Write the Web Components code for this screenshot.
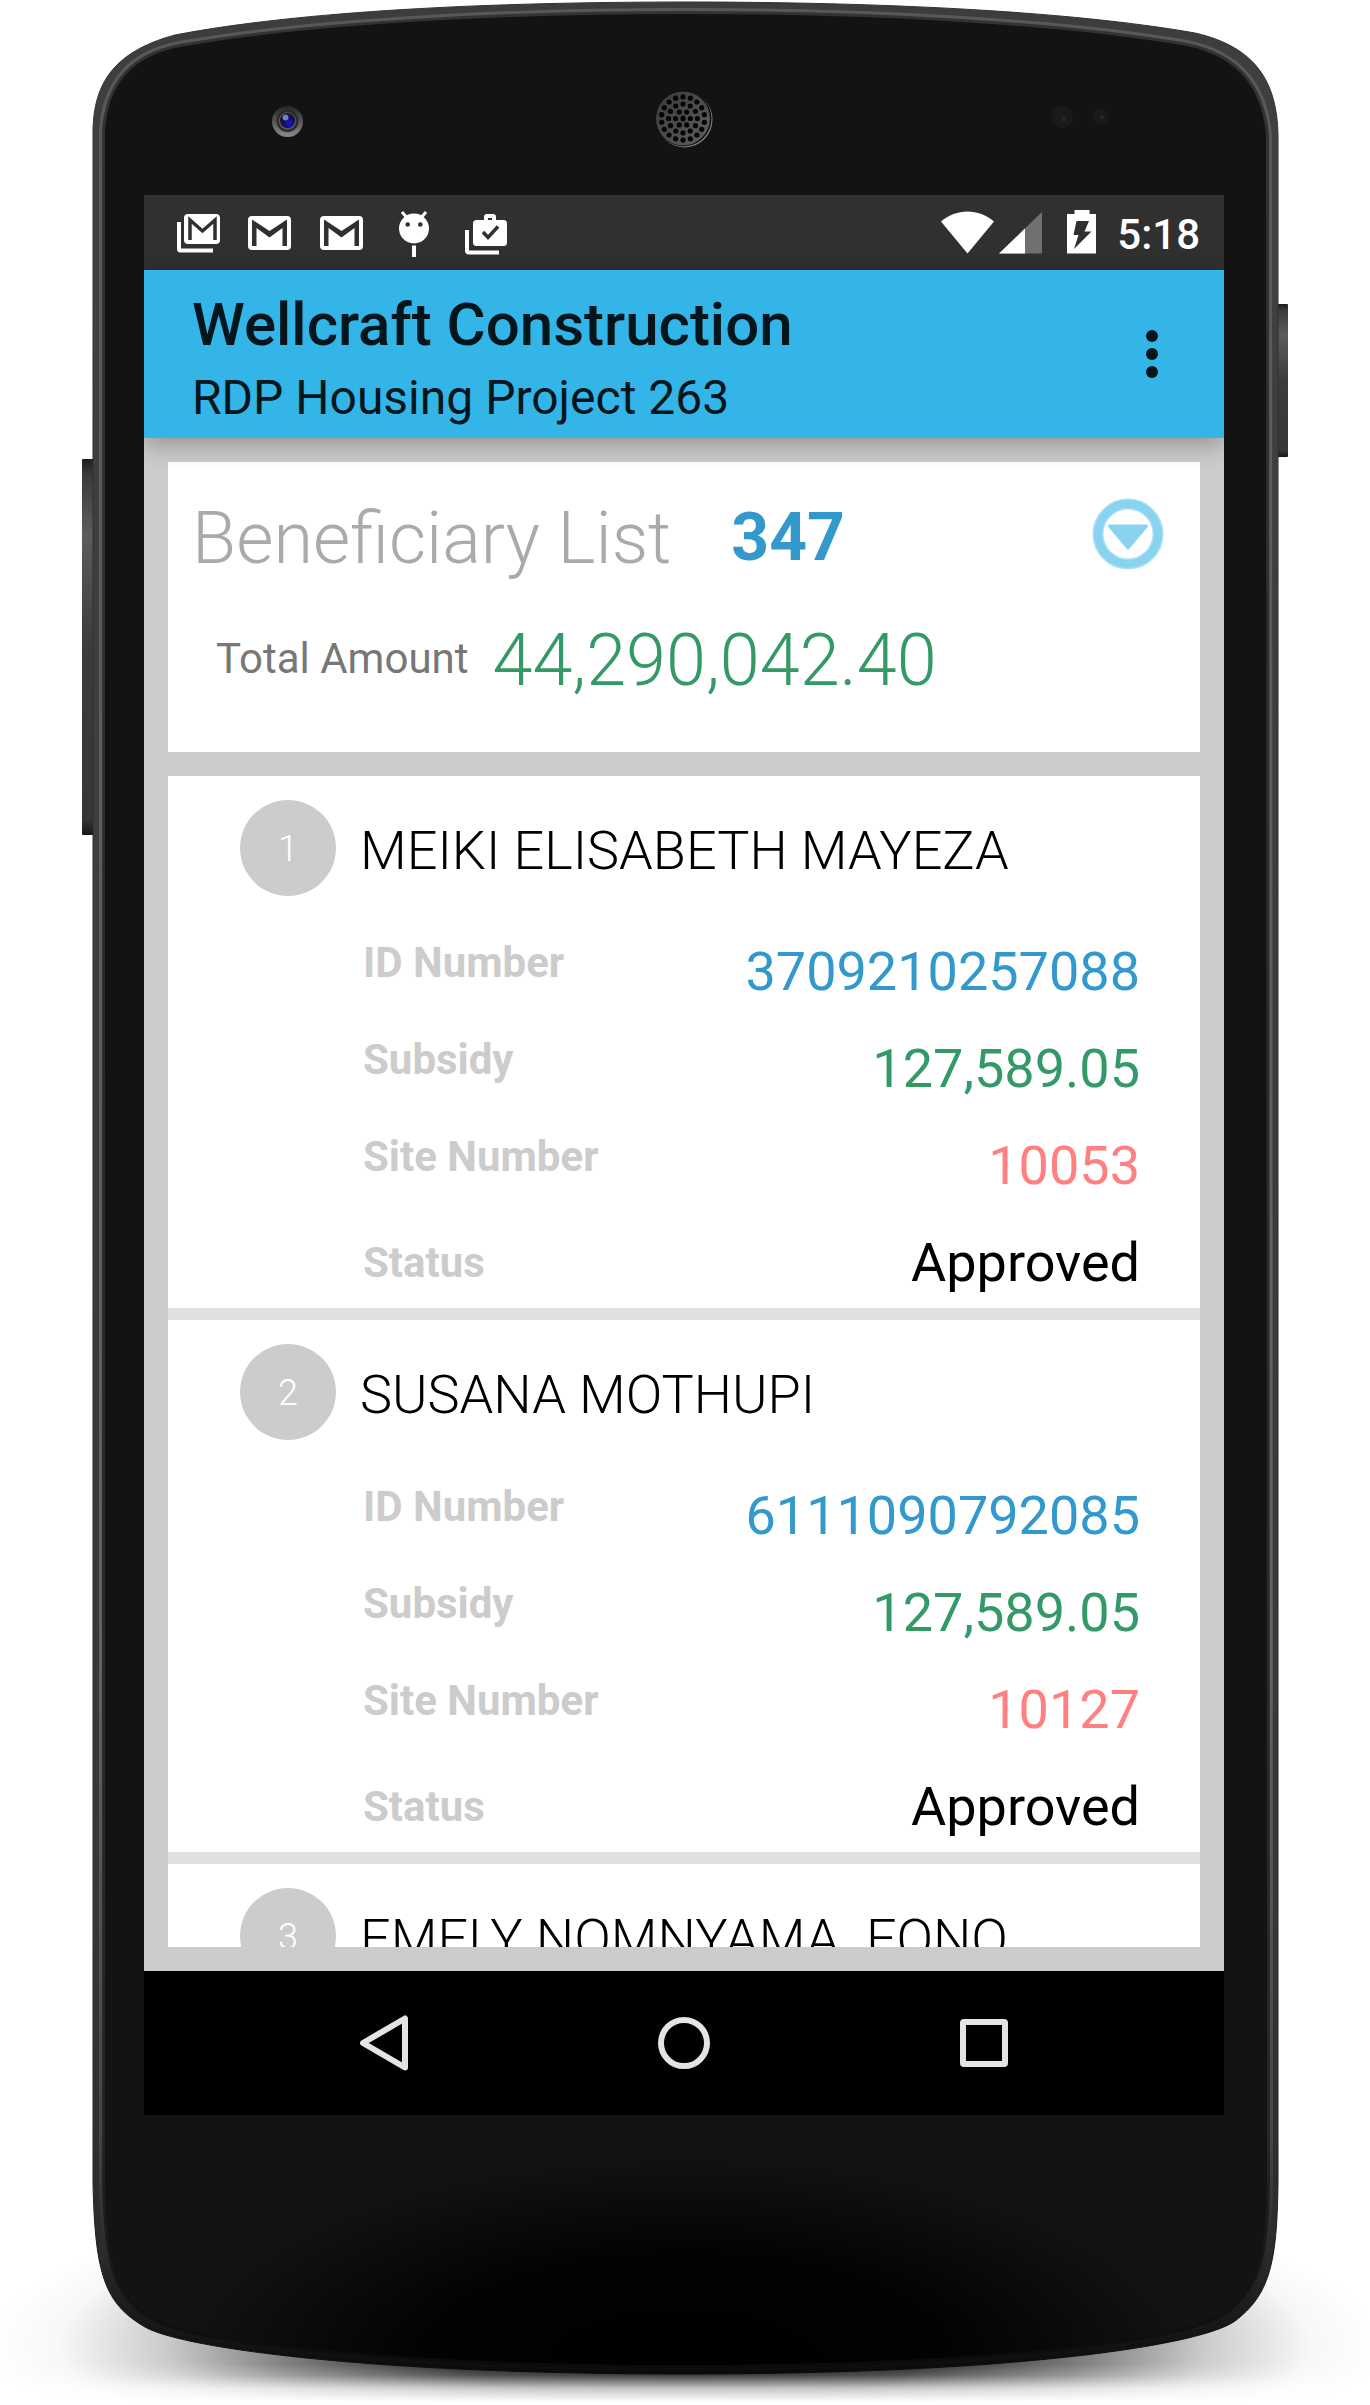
<!DOCTYPE html>
<html lang="en">
<head>
<meta charset="utf-8">
<meta name="viewport" content="width=device-width, initial-scale=1">
<title>Beneficiary List</title>
<style>
  html, body { margin: 0; background: #fff; }
  body { font-family: Roboto, "Liberation Sans", sans-serif; color: #000; }
</style>
</head>
<body>
<phone-frame>
  <status-bar time="5:18"></status-bar>
  <app-toolbar>
    <span slot="title">Wellcraft Construction</span>
    <span slot="subtitle">RDP Housing Project 263</span>
  </app-toolbar>
  <app-content>
    <summary-card heading="Beneficiary List" count="347" label="Total Amount" amount="44,290,042.40"></summary-card>
    <beneficiary-list>
      <beneficiary-item number="1" name="MEIKI ELISABETH MAYEZA" idnumber="3709210257088" subsidy="127,589.05" site="10053" status="Approved"></beneficiary-item>
      <beneficiary-item number="2" name="SUSANA MOTHUPI" idnumber="6111090792085" subsidy="127,589.05" site="10127" status="Approved"></beneficiary-item>
      <beneficiary-item number="3" name="EMELY NOMNYAMA  FONO"></beneficiary-item>
    </beneficiary-list>
  </app-content>
  <nav-bar></nav-bar>
</phone-frame>

<script>
  function define(name, render) {
    customElements.define(name, class extends HTMLElement {
      connectedCallback() {
        if (this.shadowRoot) return;
        const root = this.attachShadow({ mode: 'open' });
        root.innerHTML = '<style>*{box-sizing:border-box}button{border:0;padding:0;background:none;color:inherit;font:inherit}svg{display:block}</style>' + render(this);
      }
    });
  }

  /* Speaker perforations: a centre hole and three rings around it */
  function speakerHoles() {
    let out = '<ellipse cx="683" cy="118.500" rx="2.600" ry="3"/>';
    [[7.4, 6], [14.4, 12], [21.6, 18]].forEach(([r, n]) => {
      for (let i = 0; i < n; i++) {
        const a = (i + (n === 6 ? 0.5 : 0)) / n * Math.PI * 2 + Math.PI / 2;
        out += `<circle cx="${(683 + r * Math.cos(a)).toFixed(1)}" cy="${(118.5 + r * Math.sin(a)).toFixed(1)}" r="2.600"/>`;
      }
    });
    return out;
  }

  const OUTER = 'M93 2183 L93 130 C94 85 112 52 175 35 C300 11 490 2 685 2 C880 2 1070 11 1195 33 C1256 47 1277 82 1278 135 L1278 2183 C1277 2265 1269 2295 1235 2321 C1200 2346 1010 2374 685 2374 C360 2374 180 2347 145 2327 C105 2304 95 2275 93 2183 Z';
  const INNER = 'M105 2183 L105 130 C108 95 122 58 180 47 C310 24 500 14 685 14 C870 14 1060 24 1187 46 C1240 57 1262 90 1266 135 L1267 2183 C1266 2260 1257 2288 1225 2312 C1185 2338 1000 2365 685 2365 C370 2365 190 2338 155 2319 C117 2297 107 2270 105 2183 Z';

  define('phone-frame', () => `
    <style>
      :host { display: flex; flex-direction: column; position: relative; isolation: isolate; box-sizing: border-box; height: 100vh; padding: 195px 146px 290px 144px; overflow: hidden; }
      .body { position: absolute; inset: 0; width: 100%; height: 100%; z-index: -1; }
      .screen { flex: 1; min-height: 0; display: flex; flex-direction: column; overflow: hidden; background: #ccc; }
    </style>
    <svg class="body" viewBox="0 0 1370 2405" preserveAspectRatio="none" aria-hidden="true">
      <defs>
        <radialGradient id="shade"><stop offset="0" stop-color="#000"/><stop offset=".35" stop-color="#000" stop-opacity=".85"/><stop offset=".58" stop-color="#000" stop-opacity=".5"/><stop offset=".75" stop-color="#000" stop-opacity=".2"/><stop offset=".9" stop-color="#000" stop-opacity=".03"/><stop offset="1" stop-color="#000" stop-opacity="0"/></radialGradient>
        <linearGradient id="fade" gradientUnits="userSpaceOnUse" x1="0" x2="0" y1="2364" y2="2402"><stop offset="0" stop-color="#fff"/><stop offset=".3" stop-color="#fff" stop-opacity=".8"/><stop offset=".65" stop-color="#fff" stop-opacity=".25"/><stop offset="1" stop-color="#fff" stop-opacity="0"/></linearGradient>
        <mask id="floor"><rect width="1370" height="2405" fill="url(#fade)"/></mask>
        <linearGradient id="rim" x1="0" y1="0" x2="0" y2="1"><stop offset="0" stop-color="#3c3c3d"/><stop offset=".06" stop-color="#404042"/><stop offset=".8" stop-color="#363739"/><stop offset=".95" stop-color="#2b2b2b"/><stop offset="1" stop-color="#0a0a0a"/></linearGradient>
        <linearGradient id="line" gradientUnits="userSpaceOnUse" x1="0" y1="0" x2="0" y2="2374"><stop offset="0" stop-color="#58585b"/><stop offset=".7" stop-color="#626267"/><stop offset=".9" stop-color="#464648"/><stop offset="1" stop-color="#0c0c0c"/></linearGradient>
        <linearGradient id="edge" gradientUnits="userSpaceOnUse" x1="0" y1="0" x2="0" y2="2374"><stop offset="0" stop-color="#333334"/><stop offset=".9" stop-color="#262628"/><stop offset="1" stop-color="#0a0a0a"/></linearGradient>
        <radialGradient id="glow" gradientUnits="userSpaceOnUse" cx="0" cy="0" r="1" gradientTransform="translate(685 2365) scale(520 215)"><stop offset="0" stop-color="#000"/><stop offset=".5" stop-color="#000" stop-opacity=".9"/><stop offset="1" stop-color="#000" stop-opacity="0"/></radialGradient>
        <linearGradient id="key" x1="0" x2="0" y1="0" y2="1"><stop offset="0" stop-color="#1d1d1d"/><stop offset=".04" stop-color="#3a3a3a"/><stop offset=".2" stop-color="#5c5c5c"/><stop offset=".5" stop-color="#3c3c3c"/><stop offset=".96" stop-color="#363636"/><stop offset="1" stop-color="#151515"/></linearGradient>
        <linearGradient id="lens" x1="0" x2="0" y1="0" y2="1"><stop offset="0" stop-color="#242424"/><stop offset="1" stop-color="#8d8b89"/></linearGradient>
        <linearGradient id="grille" x1="0" x2="1" y1="0" y2="1"><stop offset="0" stop-color="#383838"/><stop offset="1" stop-color="#606060"/></linearGradient>
      </defs>
      <g mask="url(#floor)"><ellipse cx="685" cy="2345" rx="695" ry="175" fill="url(#shade)"/></g>
      <rect x="82" y="459" width="12" height="376" rx="1" fill="url(#key)"/>
      <rect x="1277" y="304" width="11" height="153" rx="1" fill="url(#key)"/>
      <path d="${OUTER}" fill="url(#rim)" stroke="url(#edge)" stroke-width="1"/>
      <path d="${INNER}" fill="none" stroke="url(#line)" stroke-width="12"/>
      <path d="${INNER}" fill="#131313" stroke="url(#edge)" stroke-width="6"/>
      <path d="${INNER}" fill="#131313"/>
      <path d="${INNER}" fill="url(#glow)"/>
      <ellipse cx="287.500" cy="121.500" rx="15.500" ry="15.500" fill="url(#lens)"/>
      <circle cx="287.500" cy="121" r="11" fill="#2a2827"/>
      <circle cx="287.500" cy="121" r="9" fill="#57534f"/>
      <circle cx="287.500" cy="120.500" r="7.500" fill="#11124f"/>
      <circle cx="289" cy="123" r="4" fill="#1512a8"/>
      <circle cx="285.500" cy="117.500" r="3" fill="#6f86a5"/>
      <circle cx="684.500" cy="119.500" r="28" fill="#808080"/>
      <circle cx="683.500" cy="118.500" r="28" fill="#0c0c0c"/>
      <circle cx="683" cy="118.500" r="27" fill="url(#grille)"/>
      <g fill="#050505">${speakerHoles()}</g>
      <circle cx="1062" cy="117" r="11" fill="#1b1a1a"/><circle cx="1064" cy="119" r="2" fill="#3b211a"/>
      <circle cx="1101" cy="117" r="8" fill="#1b1a1a"/><circle cx="1102" cy="117" r="2" fill="#3b211a"/>
    </svg>
    <div class="screen"><slot></slot></div>`);

  define('status-bar', (el) => `
    <style>
      :host { display: flex; justify-content: space-between; height: 75px; flex: none; background: #303030; color: #fff; padding: 0 24px 0 18px; }
      .group { display: flex; }
      time { font-size: 42px; font-weight: 500; line-height: 80px; }
    </style>
    <div class="group" aria-hidden="true">
      <svg width="72" height="75" viewBox="0 0 72 75"><path d="M17 27V54a1.500 1.500 0 0 0 1.500 1.500H51" fill="none" stroke="#fff" stroke-width="4"/><rect x="22" y="19" width="36" height="30" rx="4" fill="#fff"/><path d="M28 45V25L40.500 36 53 25V45" fill="none" stroke="#303030" stroke-width="3.500"/></svg>
      <svg width="72" height="75" viewBox="1 0 72 75"><rect x="15" y="21" width="43" height="34" rx="4" fill="#fff"/><path d="M19 51V24.500L36.500 36 54 24.500V51H49.500V33L36.500 42.500 23.500 33V51Z" fill="#303030"/></svg>
      <svg width="72" height="75" viewBox="1 0 72 75"><rect x="15" y="21" width="43" height="34" rx="4" fill="#fff"/><path d="M19 51V24.500L36.500 36 54 24.500V51H49.500V33L36.500 42.500 23.500 33V51Z" fill="#303030"/></svg>
      <svg width="72" height="75" viewBox="0 0 72 75"><path d="M24 17l6 7M48 17l-6 7" stroke="#fff" stroke-width="3"/><ellipse cx="36" cy="33.500" rx="15" ry="15" fill="#fff"/><circle cx="29.700" cy="29.500" r="2.300" fill="#303030"/><circle cx="42.300" cy="29.500" r="2.300" fill="#303030"/><path d="M36 50.500V62" stroke="#fff" stroke-width="4"/></svg>
      <svg width="72" height="75" viewBox="0 0 72 75"><path d="M17 35V56a1.500 1.500 0 0 0 1.500 1.500H49" fill="none" stroke="#fff" stroke-width="4"/><rect x="23" y="25" width="34" height="26" rx="3.500" fill="#fff"/><path d="M36 26V22a1 1 0 0 1 1-1h6a1 1 0 0 1 1 1V26" fill="none" stroke="#fff" stroke-width="4"/><path d="M33 37l5 5.500 10-11" fill="none" stroke="#303030" stroke-width="3.500"/></svg>
    </div>
    <div class="group">
      <svg width="181" height="75" viewBox="936 195 181 75" aria-hidden="true"><path d="M941 221.500C956 208 979 208 994 221.500L967.500 253.500Z" fill="#fff"/><path d="M999 253.500L1042 212V253.500Z" fill="#707070"/><path d="M999 253.500L1025 228.500V253.500Z" fill="#fff"/><path d="M1074.500 210h15v4h6.500v39.500h-29V214h7.500Z" fill="#fff"/><path d="M1076.500 221h12.500l-4.500 10.500h7L1074 249l4.500-14h-5Z" fill="#303030"/></svg>
      <time>${el.getAttribute('time')}</time>
    </div>`);

  define('app-toolbar', () => `
    <style>
      :host { display: flex; justify-content: space-between; align-items: stretch; flex: none; height: 168px; background: #33b5e7; color: #04161c; padding: 0 24px 0 48px; position: relative; z-index: 1; box-shadow: 0 6px 24px rgba(0,0,0,.3); }
      .titles { display: flex; flex-direction: column; gap: 10px; padding-top: 20px; }
      h1 { margin: 0; font-size: 60px; line-height: 70px; font-weight: 500; }
      p { margin: 0; font-size: 48px; line-height: 56px; }
      button { width: 96px; }
    </style>
    <div class="titles"><h1><slot name="title"></slot></h1><p><slot name="subtitle"></slot></p></div>
    <button aria-label="More options"><svg width="96" height="96" viewBox="0 0 96 96" fill="currentColor"><circle cx="48" cy="30" r="6"/><circle cx="48" cy="48" r="6"/><circle cx="48" cy="66" r="6"/></svg></button>`);

  define('app-content', () => `
    <style>
      :host { display: flex; flex-direction: column; gap: 24px; flex: 1; min-height: 0; box-sizing: border-box; padding: 24px; background: #ccc; }
    </style><slot></slot>`);

  define('summary-card', (el) => `
    <style>
      :host { display: block; flex: none; background: #fff; padding: 34px 34px 48px 24px; }
      .head { display: flex; align-items: flex-start; }
      h2 { margin: 0 60px 0 0; font-size: 72px; line-height: 86px; font-weight: 300; color: #aaa; }
      .count { flex: 1; font-size: 66px; line-height: 84px; font-weight: 700; color: #3399cc; }
      .total { display: flex; align-items: flex-start; gap: 24px; margin-top: 36px; padding-left: 24px; }
      .label { font-size: 42px; line-height: 82px; color: #777; }
      .amount { font-size: 72px; line-height: 86px; font-weight: 300; color: #339966; }
    </style>
    <div class="head"><h2>${el.getAttribute('heading')}</h2><span class="count">${el.getAttribute('count')}</span>
      <button aria-label="Expand"><svg width="76" height="76" viewBox="0 0 76 76"><circle cx="38" cy="38" r="30" fill="none" stroke="#a9e0f5" stroke-width="11"/><circle cx="38" cy="38" r="30" fill="none" stroke="#87d3f0" stroke-width="8"/><path d="M19.500 30h37L38 52Z" fill="#87d3f0" stroke="#87d3f0" stroke-width="3" stroke-linejoin="round"/></svg></button></div>
    <div class="total"><span class="label">${el.getAttribute('label')}</span><span class="amount">${el.getAttribute('amount')}</span></div>`);

  define('beneficiary-list', () => `
    <style>
      :host { display: block; flex: 1; min-height: 0; overflow: hidden; background: #fff; }
    </style><div role="list"><slot></slot></div>`);

  define('beneficiary-item', (el) => {
    const fields = [['ID Number', 'idnumber', 'id'], ['Subsidy', 'subsidy', 'money'], ['Site Number', 'site', 'site'], ['Status', 'status', 'status']]
      .filter(([, attr]) => el.hasAttribute(attr))
      .map(([label, attr, cls]) => `<div class="${cls}"><dt>${label}</dt><dd>${el.getAttribute(attr)}</dd></div>`).join('');
    return `
    <style>
      :host { display: block; padding: 24px 60px 14px 72px; border-bottom: 12px solid #e0e0e0; }
      :host(:last-child) { border-bottom: 0; }
      .who { display: flex; gap: 24px; }
      .badge { flex: none; width: 96px; height: 96px; border-radius: 50%; background: #ccc; color: #fff; font-size: 36px; font-weight: 300; line-height: 98px; text-align: center; }
      h3 { margin: 0; font-size: 54px; line-height: 102px; font-weight: 300; white-space: pre; }
      dl { margin: 38px 0 0 123px; display: flex; flex-direction: column; gap: 34px; }
      dl div { display: flex; justify-content: space-between; align-items: flex-start; }
      dl .status { align-items: center; }
      dt { font-size: 42px; line-height: 45px; font-weight: 700; color: #ccc; }
      dd { margin: 0; font-size: 54px; line-height: 63px; }
      .id dd { color: #3399cc; } .money dd { color: #339966; } .site dd { color: #ff8080; }
    </style>
    <div class="who"><span class="badge">${el.getAttribute('number')}</span><h3>${el.getAttribute('name')}</h3></div>
    ${fields ? `<dl>${fields}</dl>` : ''}`;
  });
  document.querySelectorAll('beneficiary-item').forEach((el) => el.setAttribute('role', 'listitem'));

  define('nav-bar', () => `
    <style>
      :host { display: flex; justify-content: center; flex: none; height: 144px; background: #000; }
      nav { display: flex; }
      button { width: 300px; display: flex; align-items: center; justify-content: center; }
    </style>
    <nav aria-label="System">
      <button aria-label="Back"><svg width="72" height="72" viewBox="0 0 72 72"><path d="M57 11.500V60.500L15 36Z" fill="none" stroke="#e4e4e4" stroke-width="6" stroke-linejoin="round"/></svg></button>
      <button aria-label="Home"><svg width="72" height="72" viewBox="0 0 72 72"><circle cx="36" cy="36" r="23" fill="none" stroke="#e4e4e4" stroke-width="6"/></svg></button>
      <button aria-label="Recent apps"><svg width="72" height="72" viewBox="0 0 72 72"><rect x="15" y="15" width="42" height="42" rx="1" fill="none" stroke="#e4e4e4" stroke-width="6" stroke-linejoin="round"/></svg></button>
    </nav>`);
</script>
</body>
</html>
